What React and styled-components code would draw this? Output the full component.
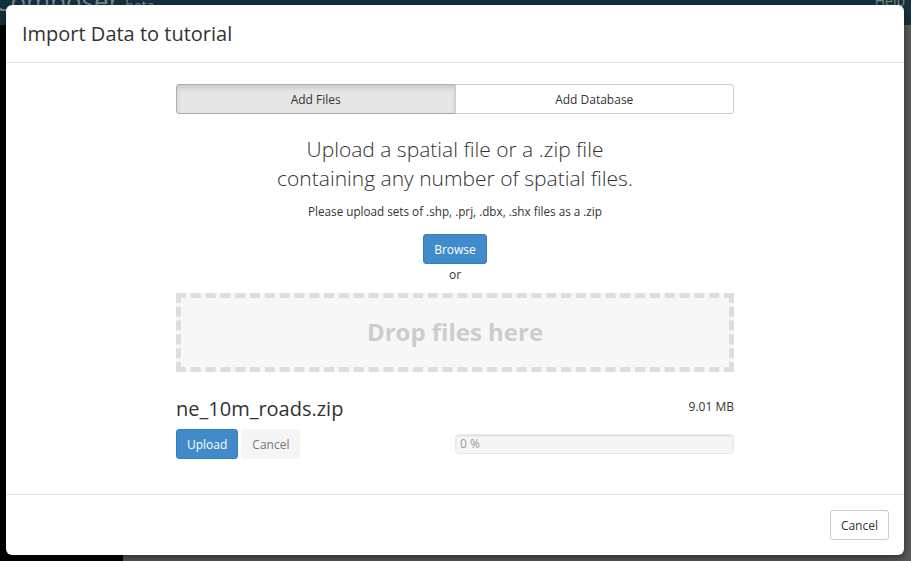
import React, { useState } from "react";
import styled, { createGlobalStyle } from "styled-components";

const GlobalStyle = createGlobalStyle`
    html, body {
        margin: 0;
        padding: 0;
        height: 100%;
        overflow: hidden;
    }
    body {
        font-family: "Open Sans", "Liberation Sans", sans-serif;
        background: #5c5c5c;
    }
    * {
        box-sizing: border-box;
    }
`;

const Page = styled.div`
    display: flex;
    flex-direction: column;
    height: 561px;
`;

const Navbar = styled.div`
    display: flex;
    justify-content: space-between;
    align-items: flex-start;
    height: 25px;
    background-color: #14323e;
    color: #7d8a90;
    padding: 0 6px 0 0;
    overflow: hidden;
`;

const Brand = styled.div`
    font-size: 26px;
    line-height: 1;
    margin-top: -12px;
    margin-left: -6px;

    small {
        font-size: 14px;
        margin-left: 6px;
    }
`;

const NavLink = styled.div`
    font-size: 14px;
    line-height: 1;
    margin-top: -6px;
`;

const Layout = styled.div`
    flex: 1;
    display: flex;
`;

const Sidebar = styled.div`
    width: 123px;
    background-color: #000;
`;

const Main = styled.div`
    flex: 1;
    background-color: #5a5a5a;
`;

const Modal = styled.div`
    position: absolute;
    top: 5px;
    left: 6px;
    width: 898px;
    height: 550px;
    background: #fff;
    border-radius: 6px;
    box-shadow: 0 3px 9px rgba(0, 0, 0, 0.5);
    display: flex;
    flex-direction: column;
    color: #333;
`;

const Header = styled.div`
    padding: 15px 16px;
    border-bottom: 1px solid #e5e5e5;
`;

const Title = styled.h4`
    margin: 0;
    font-size: 20px;
    font-weight: 400;
    line-height: 27px;
    color: #333;
`;

const Body = styled.div`
    flex: 1;
    padding: 21px 0 0;
    display: flex;
    justify-content: center;
`;

const Column = styled.div`
    width: 558px;
    display: flex;
    flex-direction: column;
`;

const Tabs = styled.div`
    display: flex;
    height: 30px;
`;

const Tab = styled.button`
    flex: 1;
    font-family: inherit;
    font-size: 12px;
    color: #333;
    border: 1px solid #ccc;
    background-color: ${(props) => (props.active ? "#e6e6e6" : "#fff")};
    box-shadow: ${(props) => (props.active ? "inset 0 3px 5px rgba(0, 0, 0, 0.125)" : "none")};
    border-color: ${(props) => (props.active ? "#adadad" : "#ccc")};
    border-radius: ${(props) => (props.first ? "3px 0 0 3px" : "0 3px 3px 0")};
    margin-left: ${(props) => (props.first ? "0" : "-1px")};
    cursor: pointer;
    padding: 0;
`;

const Lead = styled.p`
    margin: 21px 0 0;
    text-align: center;
    font-size: 21px;
    font-weight: 300;
    line-height: 29px;
    color: #333;
`;

const Hint = styled.p`
    margin: 10px 0 0;
    text-align: center;
    font-size: 11.7px;
    line-height: 17px;
    color: #333;
`;

const Center = styled.div`
    display: flex;
    flex-direction: column;
    align-items: center;
    margin-top: ${(props) => props.top || 0}px;
`;

const Button = styled.button`
    font-family: inherit;
    font-size: 12px;
    height: 30px;
    padding: 0 10px;
    border-radius: 3px;
    border: 1px solid ${(props) => (props.primary ? "#357ebd" : props.plain ? "#f5f5f5" : "#ccc")};
    background-color: ${(props) => (props.primary ? "#428bca" : props.plain ? "#f5f5f5" : "#fff")};
    color: ${(props) => (props.primary ? "#fff" : props.plain ? "#777" : "#333")};
    cursor: pointer;
`;

const Or = styled.span`
    font-size: 12px;
    line-height: 17px;
    margin-top: 2px;
    color: #333;
`;

const DropZone = styled.div`
    margin-top: 10px;
    height: 79px;
    border: 5px dashed #ddd;
    background-color: #f7f7f7;
    display: flex;
    align-items: center;
    justify-content: center;
    font-size: 24px;
    font-weight: 700;
    color: #ccc;
    padding-bottom: 2px;
`;

const FileRow = styled.div`
    display: flex;
    justify-content: space-between;
    align-items: center;
    margin-top: 23px;
`;

const FileName = styled.span`
    font-size: 20px;
    line-height: 28px;
    color: #333;
`;

const FileSize = styled.span`
    font-size: 12px;
    color: #333;
    margin-top: -6px;
`;

const Actions = styled.div`
    display: flex;
    align-items: center;
    margin-top: 6px;
`;

const ButtonGroup = styled.div`
    display: flex;
    gap: 3px;
    width: 279px;
`;

const Progress = styled.div`
    flex: 1;
    height: 20px;
    border-radius: 4px;
    background-color: #f5f5f5;
    box-shadow: inset 0 1px 2px rgba(0, 0, 0, 0.1);
    border: 1px solid #e8e8e8;
    font-size: 12px;
    line-height: 18px;
    color: #999;
    padding-left: 4px;
`;

const Footer = styled.div`
    padding: 15px;
    border-top: 1px solid #e5e5e5;
    display: flex;
    justify-content: flex-end;
`;

const App = () => {
    const [tab, setTab] = useState("files");

    return (
        <>
            <GlobalStyle />
            <Page>
                <Navbar>
                    <Brand>
                        Composer<small>beta</small>
                    </Brand>
                    <NavLink>Help</NavLink>
                </Navbar>
                <Layout>
                    <Sidebar />
                    <Main />
                </Layout>
            </Page>
            <Modal>
                <Header>
                    <Title>Import Data to tutorial</Title>
                </Header>
                <Body>
                    <Column>
                        <Tabs>
                            <Tab first active={tab === "files"} onClick={() => setTab("files")}>
                                Add Files
                            </Tab>
                            <Tab active={tab === "db"} onClick={() => setTab("db")}>
                                Add Database
                            </Tab>
                        </Tabs>
                        <Lead>
                            Upload a spatial file or a .zip file
                            <br />
                            containing any number of spatial files.
                        </Lead>
                        <Hint>Please upload sets of .shp, .prj, .dbx, .shx files as a .zip</Hint>
                        <Center top={14}>
                            <Button primary>Browse</Button>
                            <Or>or</Or>
                        </Center>
                        <DropZone>Drop files here</DropZone>
                        <FileRow>
                            <FileName>ne_10m_roads.zip</FileName>
                            <FileSize>9.01 MB</FileSize>
                        </FileRow>
                        <Actions>
                            <ButtonGroup>
                                <Button primary>Upload</Button>
                                <Button plain>Cancel</Button>
                            </ButtonGroup>
                            <Progress>0 %</Progress>
                        </Actions>
                    </Column>
                </Body>
                <Footer>
                    <Button>Cancel</Button>
                </Footer>
            </Modal>
        </>
    );
};

export default App;
